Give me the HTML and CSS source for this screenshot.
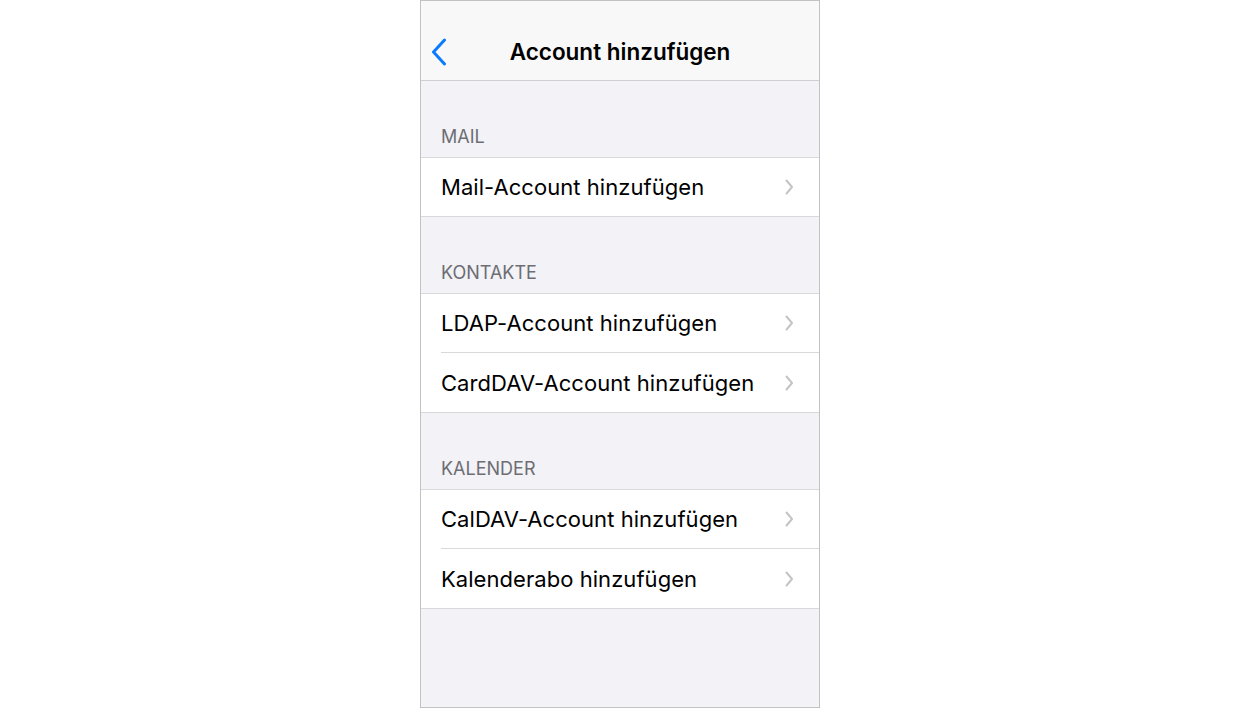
FILE: index.html
```html
<!DOCTYPE html>
<html lang="de">
<head>
<meta charset="utf-8">
<title>Account hinzufügen</title>
<link rel="stylesheet" href="styles.css">
</head>
<body>
<div class="phone">
  <header class="nav">
    <button class="back" aria-label="Zurück">
      <svg width="18" height="28" viewBox="0 0 18 28"><path d="M14.5 2 L3.5 14 L14.5 26" fill="none" stroke="#0a7aff" stroke-width="3" stroke-linecap="round" stroke-linejoin="round"/></svg>
    </button>
    <h1 class="title">Account hinzufügen</h1>
  </header>
  <main class="content">
    <section class="section">
      <h2 class="section-header">Mail</h2>
      <ul class="group">
        <li class="row"><span class="label">Mail-Account hinzufügen</span><svg class="chev" width="9" height="16" viewBox="0 0 9 16"><path d="M1.5 1.5 L7 8 L1.5 14.5" fill="none" stroke="#c4c4c7" stroke-width="2" stroke-linecap="round" stroke-linejoin="round"/></svg></li>
      </ul>
    </section>
    <section class="section">
      <h2 class="section-header">Kontakte</h2>
      <ul class="group">
        <li class="row"><span class="label">LDAP-Account hinzufügen</span><svg class="chev" width="9" height="16" viewBox="0 0 9 16"><path d="M1.5 1.5 L7 8 L1.5 14.5" fill="none" stroke="#c4c4c7" stroke-width="2" stroke-linecap="round" stroke-linejoin="round"/></svg></li>
        <li class="row"><span class="label">CardDAV-Account hinzufügen</span><svg class="chev" width="9" height="16" viewBox="0 0 9 16"><path d="M1.5 1.5 L7 8 L1.5 14.5" fill="none" stroke="#c4c4c7" stroke-width="2" stroke-linecap="round" stroke-linejoin="round"/></svg></li>
      </ul>
    </section>
    <section class="section">
      <h2 class="section-header">Kalender</h2>
      <ul class="group">
        <li class="row"><span class="label">CalDAV-Account hinzufügen</span><svg class="chev" width="9" height="16" viewBox="0 0 9 16"><path d="M1.5 1.5 L7 8 L1.5 14.5" fill="none" stroke="#c4c4c7" stroke-width="2" stroke-linecap="round" stroke-linejoin="round"/></svg></li>
        <li class="row"><span class="label">Kalenderabo hinzufügen</span><svg class="chev" width="9" height="16" viewBox="0 0 9 16"><path d="M1.5 1.5 L7 8 L1.5 14.5" fill="none" stroke="#c4c4c7" stroke-width="2" stroke-linecap="round" stroke-linejoin="round"/></svg></li>
      </ul>
    </section>
  </main>
</div>
</body>
</html>
```

FILE: styles.css
```css
* { box-sizing: border-box; }
html, body { margin: 0; padding: 0; }
body {
  background: #ffffff;
  font-family: Inter, "Noto Sans", "Liberation Sans", sans-serif;
  display: flex;
  justify-content: center;
}
.phone {
  width: 400px;
  height: 708px;
  border: 1px solid #c2c2c2;
  background: #f2f2f7;
  display: flex;
  flex-direction: column;
  overflow: hidden;
}
.nav {
  height: 80px;
  flex: none;
  background: #f8f8f8;
  border-bottom: 1px solid #cfcfd2;
  display: grid;
  grid-template-columns: 60px 1fr 60px;
  align-items: center;
  padding-top: 22px;
}
.back {
  grid-column: 1;
  background: none;
  border: 0;
  padding: 0 0 0 9px;
  display: flex;
  align-items: center;
}
.title {
  grid-column: 2;
  margin: 0;
  text-align: center;
  font-size: 22.5px;
  font-weight: 600;
  color: #000;
  letter-spacing: 0;
}
.content { flex: 1; }
.section-header {
  margin: 0;
  height: 76px;
  display: flex;
  align-items: flex-end;
  padding: 0 20px 10px;
  font-size: 18px;
  font-weight: 400;
  text-transform: uppercase;
  color: #6d6d72;
  letter-spacing: 0;
}
.group {
  list-style: none;
  margin: 0;
  padding: 0;
  background: #fff;
  border-top: 1px solid #d9d9dc;
  border-bottom: 1px solid #d9d9dc;
}
.row {
  height: 58px;
  margin-left: 20px;
  padding-right: 25px;
  display: flex;
  align-items: center;
  justify-content: space-between;
  font-size: 22px;
  color: #000;
  letter-spacing: 0.05px;
}
.row + .row { border-top: 1px solid #d9d9dc; height: 60px; }
.chev { flex: none; }
```
